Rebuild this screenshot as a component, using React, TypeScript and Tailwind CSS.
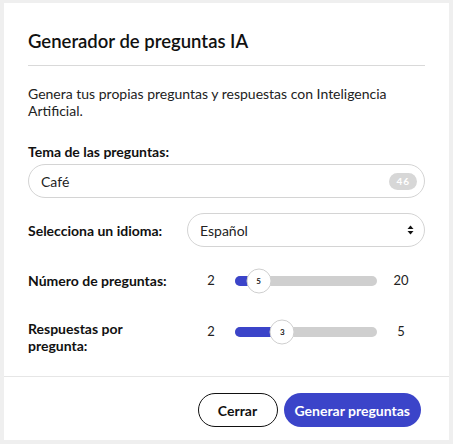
import React from 'react';

const font = { fontFamily: 'Lato, "Noto Sans", sans-serif' };

const Slider = ({ min, max, value }: { min: number; max: number; value: number }) => {
  const pct = ((value - min) / (max - min)) * 100;
  return (
    <div className="flex items-center flex-1">
      <span className="w-12 text-center text-[13px] text-[#222]">{min}</span>
      <div className="relative flex-1 h-2.5 rounded-full bg-[#cfcfcf]">
        <div className="absolute left-0 top-0 h-full rounded-full bg-[#3b44c9]" style={{ width: `${pct}%` }} />
        <div
          className="absolute top-1/2 -translate-x-1/2 -translate-y-1/2 w-[25px] h-[25px] rounded-full bg-white border border-[#cfcfcf] flex items-center justify-center text-[8px] font-bold text-[#222]"
          style={{ left: `${pct}%` }}
        >
          {value}
        </div>
      </div>
      <span className="w-12 text-center text-[13px] text-[#222]">{max}</span>
    </div>
  );
};

export default function App() {
  return (
    <div className="w-[453px] h-[444px] bg-[#efefef] pt-[3px] px-[4px]" style={font}>
      <div className="bg-white h-[437px] flex flex-col">
        <div className="px-6 pt-6">
          <h2 className="text-[18.5px] leading-7 font-semibold text-[#111] pb-[10px] border-b border-[#d9d9d9]">
            Generador de preguntas IA
          </h2>
          <p className="mt-[19px] text-[14px] leading-[17px] text-[#222]">
            Genera tus propias preguntas y respuestas con Inteligencia Artificial.
          </p>

          <label className="block mt-[24px] text-[14px] leading-[18px] font-bold text-[#111]">
            Tema de las preguntas:
          </label>
          <div className="mt-[3px] h-[34px] rounded-full border border-[#d4d4d4] flex items-center justify-between pl-[12px] pr-[7px]">
            <span className="text-[14px] text-[#222]">Café</span>
            <span className="h-[17px] px-[7px] rounded-full bg-[#d7d7d7] text-white text-[10px] font-bold tracking-[1px] flex items-center">
              46
            </span>
          </div>

          <div className="mt-[15px] flex items-center">
            <span className="w-[159px] text-[14px] font-bold text-[#111]">Selecciona un idioma:</span>
            <div className="flex-1 h-[34px] rounded-full border border-[#d4d4d4] flex items-center justify-between pl-[12px] pr-[10px]">
              <span className="text-[14px] text-[#222]">Español</span>
              <svg width="7" height="10" viewBox="0 0 7 10">
                <path d="M3.5 0.5 L6.5 4 H0.5 Z" fill="#111" />
                <path d="M3.5 9.5 L6.5 6 H0.5 Z" fill="#111" />
              </svg>
            </div>
          </div>

          <div className="mt-[23px] flex items-center">
            <span className="w-[159px] text-[14px] font-bold text-[#111]">Número de preguntas:</span>
            <Slider min={2} max={20} value={5} />
          </div>

          <div className="mt-[29px] flex items-start">
            <span className="w-[159px] text-[14px] leading-[17px] font-bold text-[#111]">
              Respuestas por
              <br />
              pregunta:
            </span>
            <div className="flex-1 flex pt-[2px]">
              <Slider min={2} max={5} value={3} />
            </div>
          </div>
        </div>

        <div className="mt-auto border-t border-[#e6e6e6] flex justify-end gap-[6px] px-7 pt-4 pb-[13px]">
          <button className="h-[34px] w-[80px] rounded-full border border-[#111] text-[14px] font-bold text-[#111]">
            Cerrar
          </button>
          <button className="h-[34px] px-[11px] rounded-full bg-[#3b44c9] text-[14px] font-bold text-white">
            Generar preguntas
          </button>
        </div>
      </div>
    </div>
  );
}
